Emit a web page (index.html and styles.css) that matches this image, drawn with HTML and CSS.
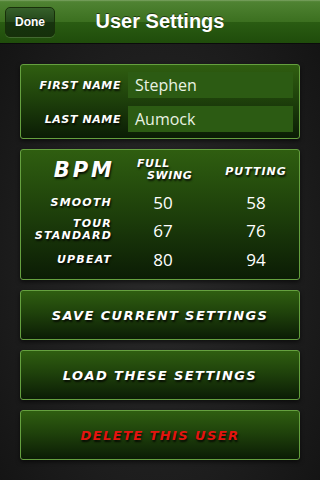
FILE: index.html
```html
<!DOCTYPE html>
<html lang="en">
<head>
    <meta charset="UTF-8">
    <title>User Settings</title>
    <link rel="stylesheet" href="styles.css">
</head>
<body>
    <div class="navbar">
        <button class="done-btn">Done</button>
        <h1 class="nav-title">User Settings</h1>
    </div>

    <div class="content">
        <div class="panel name-panel">
            <div class="name-row">
                <span class="label">First Name</span>
                <div class="field">Stephen</div>
            </div>
            <div class="name-row">
                <span class="label">Last Name</span>
                <div class="field">Aumock</div>
            </div>
        </div>

        <div class="panel bpm-panel">
            <div class="bpm-title">BPM</div>
            <div class="col-head full-swing"><span>Full</span><span class="indent">Swing</span></div>
            <div class="col-head">Putting</div>

            <div class="label">Smooth</div>
            <div class="num">50</div>
            <div class="num">58</div>

            <div class="label two-line">Tour<br>Standard</div>
            <div class="num">67</div>
            <div class="num">76</div>

            <div class="label">Upbeat</div>
            <div class="num">80</div>
            <div class="num">94</div>
        </div>

        <button class="panel action-btn">Save Current Settings</button>
        <button class="panel action-btn">Load These Settings</button>
        <button class="panel action-btn delete">Delete This User</button>
    </div>
</body>
</html>
```

FILE: styles.css
```css
* {
    box-sizing: border-box;
}

body {
    margin: 0;
    width: 320px;
    height: 480px;
    overflow: hidden;
    font-family: 'Liberation Sans', Arial, sans-serif;
    background: radial-gradient(ellipse at 50% 55%, #2b2b2b 0%, #1d1d1d 60%, #121212 100%);
}

/* ナビゲーションバー */
.navbar {
    position: relative;
    height: 44px;
    display: flex;
    align-items: center;
    justify-content: center;
    background: linear-gradient(to bottom, #7ea466 0%, #4f8332 4%, #3c7020 50%, #2a5c12 51%, #1f4c0b 100%);
    border-bottom: 1px solid #0b0b0b;
}

.nav-title {
    margin: 0;
    color: #fff;
    font-size: 20px;
    font-weight: bold;
    text-shadow: 0 -1px 0 rgba(0, 0, 0, 0.5);
}

.done-btn {
    position: absolute;
    left: 5px;
    top: 7px;
    width: 50px;
    height: 30px;
    padding: 0;
    border: 1px solid #18300a;
    border-radius: 5px;
    background: linear-gradient(to bottom, #36602a 0%, #23461a 50%, #17340e 51%, #15300b 100%);
    box-shadow: 0 1px 0 rgba(255, 255, 255, 0.15);
    color: #fff;
    font-family: 'Liberation Sans', Arial, sans-serif;
    font-size: 12px;
    font-weight: bold;
    text-shadow: 0 -1px 0 rgba(0, 0, 0, 0.6);
}

.content {
    display: flex;
    flex-direction: column;
    gap: 10px;
    padding: 20px 20px 0 20px;
}

.panel {
    border: 1px solid #65a03f;
    border-radius: 3px;
    background: linear-gradient(to bottom, #2f5e10 0%, #1f420b 45%, #0b1c05 100%);
    box-shadow: 0 2px 4px rgba(0, 0, 0, 0.6);
}

.label {
    color: #fff;
    font-family: 'DejaVu Sans', sans-serif;
    font-size: 11px;
    font-weight: bold;
    font-style: italic;
    text-transform: uppercase;
    letter-spacing: 1.2px;
    text-align: right;
    text-shadow: 1px 2px 2px rgba(0, 0, 0, 0.8);
}

/* 名前パネル */
.name-panel {
    height: 75px;
    padding: 7px 6px 7px 0;
    display: flex;
    flex-direction: column;
    gap: 8px;
}

.name-row {
    display: flex;
    align-items: center;
    gap: 7px;
}

.name-row .label {
    width: 100px;
    letter-spacing: 0.6px;
}

.field {
    flex: 1;
    height: 26px;
    padding-left: 7px;
    background: #2c5b13;
    color: #e9f2e2;
    font-family: 'Open Sans', 'Noto Sans', sans-serif;
    font-size: 16px;
    line-height: 26px;
}

/* BPMテーブル */
.bpm-panel {
    height: 131px;
    display: grid;
    grid-template-columns: 91px 84px 84px;
    grid-template-rows: 37px 28px 28px 30px;
    column-gap: 9px;
    padding-top: 1px;
    align-items: center;
}

.bpm-title {
    color: #fff;
    font-family: 'DejaVu Sans', sans-serif;
    font-size: 21px;
    font-weight: bold;
    font-style: italic;
    letter-spacing: 3px;
    text-align: right;
    margin-right: -3px;
    text-shadow: 1px 2px 2px rgba(0, 0, 0, 0.8);
}

.col-head {
    color: #fff;
    font-family: 'DejaVu Sans', sans-serif;
    font-size: 11px;
    font-weight: bold;
    font-style: italic;
    text-transform: uppercase;
    letter-spacing: 1px;
    text-align: center;
    text-shadow: 1px 2px 2px rgba(0, 0, 0, 0.8);
    padding-top: 4px;
}

.full-swing {
    display: flex;
    flex-direction: column;
    align-items: flex-start;
    line-height: 12px;
    letter-spacing: 0.6px;
    padding: 0 0 0 16px;
}

.full-swing .indent {
    padding-left: 10px;
}

.two-line {
    line-height: 12px;
}

.num {
    color: #fff;
    font-family: 'Open Sans', 'Noto Sans', sans-serif;
    font-size: 17px;
    text-align: center;
}

/* ボタン */
.action-btn {
    height: 50px;
    width: 100%;
    padding: 0;
    color: #fff;
    font-family: 'DejaVu Sans', sans-serif;
    font-size: 13px;
    font-weight: bold;
    font-style: italic;
    text-transform: uppercase;
    letter-spacing: 1.4px;
    text-shadow: 1px 2px 2px rgba(0, 0, 0, 0.8);
}

.action-btn.delete {
    color: #e3140f;
}
```
